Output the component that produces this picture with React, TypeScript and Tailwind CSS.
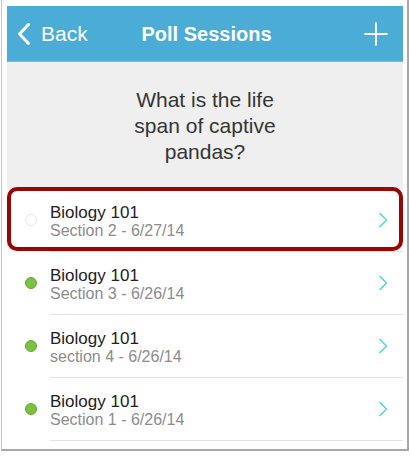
import React from "react";

const rows = [
  { title: "Biology 101", sub: "Section 2 - 6/27/14", active: false },
  { title: "Biology 101", sub: "Section 3 - 6/26/14", active: true },
  { title: "Biology 101", sub: "section 4 - 6/26/14", active: true },
  { title: "Biology 101", sub: "Section 1 - 6/26/14", active: true },
];

function Chevron() {
  return (
    <svg width="10" height="16" viewBox="0 0 10 16" className="block">
      <path d="M1.5 1 L8.5 8 L1.5 15" fill="none" stroke="#3ed3db" strokeWidth="1.3" />
    </svg>
  );
}

export default function App() {
  return (
    <div
      className="w-[410px] h-[456px] bg-white overflow-hidden"
      style={{ fontFamily: '"Liberation Sans", Arial, sans-serif' }}
    >
      <div className="ml-[1px] w-[408px] h-[451px] border-l border-l-[#c4c4c4] border-r-2 border-r-[#a8a8a8] border-b-2 border-b-[#a8a8a8] pl-[5px] pr-[4px] pt-[6px]">
        <div className="relative w-[396px] h-full bg-white">
          {/* Header */}
          <div className="h-[56px] bg-[#4badd6] border-b border-b-[#70bfe0] flex items-center relative text-white">
            <div className="flex items-center pl-[10px]">
              <svg width="14" height="22" viewBox="0 0 14 22" className="block">
                <path d="M11.5 1.5 L2.5 11 L11.5 20.5" fill="none" stroke="white" strokeWidth="3" strokeLinecap="round" strokeLinejoin="round" />
              </svg>
              <span className="ml-[10px] text-[21px] leading-none">Back</span>
            </div>
            <div className="absolute inset-0 flex items-center justify-center pointer-events-none">
              <span className="text-[20px] font-bold leading-none ml-[3px]">Poll Sessions</span>
            </div>
            <div className="ml-auto mr-[15px]">
              <svg width="24" height="24" viewBox="0 0 24 24" className="block">
                <path d="M12 0.5 V23.5 M0.5 12 H23.5" stroke="white" strokeWidth="2" />
              </svg>
            </div>
          </div>

          {/* Question */}
          <div className="h-[127px] bg-[#efefef] flex items-center justify-center">
            <p className="w-[170px] text-center text-[21px] leading-[26px] text-[#353535]">
              What is the life span of captive pandas?
            </p>
          </div>

          {/* List */}
          <div className="flex flex-col">
            {rows.map((r, i) => (
              <div key={i} className="flex flex-col">
                <div className="h-[62px] flex items-start">
                  <div className="w-[43px] pl-[18px] pt-[25px]">
                    <div
                      className={
                        r.active
                          ? "w-[12px] h-[12px] rounded-full bg-[#7cc142] border border-[#63a933]"
                          : "w-[12px] h-[12px] rounded-full bg-white border border-[#e6e6e6]"
                      }
                    />
                  </div>
                  <div className="flex flex-col pt-[15px]">
                    <span className="text-[17px] leading-[18px] text-[#222]">{r.title}</span>
                    <span className="text-[16px] leading-[17px] text-[#8c8c8c]">{r.sub}</span>
                  </div>
                  <div className="ml-auto mr-[15px] pt-[23px]">
                    <Chevron />
                  </div>
                </div>
                <div className="ml-[43px] h-px bg-[#e2e2e2]" />
              </div>
            ))}
          </div>

          {/* Highlight annotation */}
          <div className="absolute left-0 top-[181px] w-[396px] h-[64px] border-4 border-[#990606] rounded-[10px] pointer-events-none" />
        </div>
      </div>
    </div>
  );
}
